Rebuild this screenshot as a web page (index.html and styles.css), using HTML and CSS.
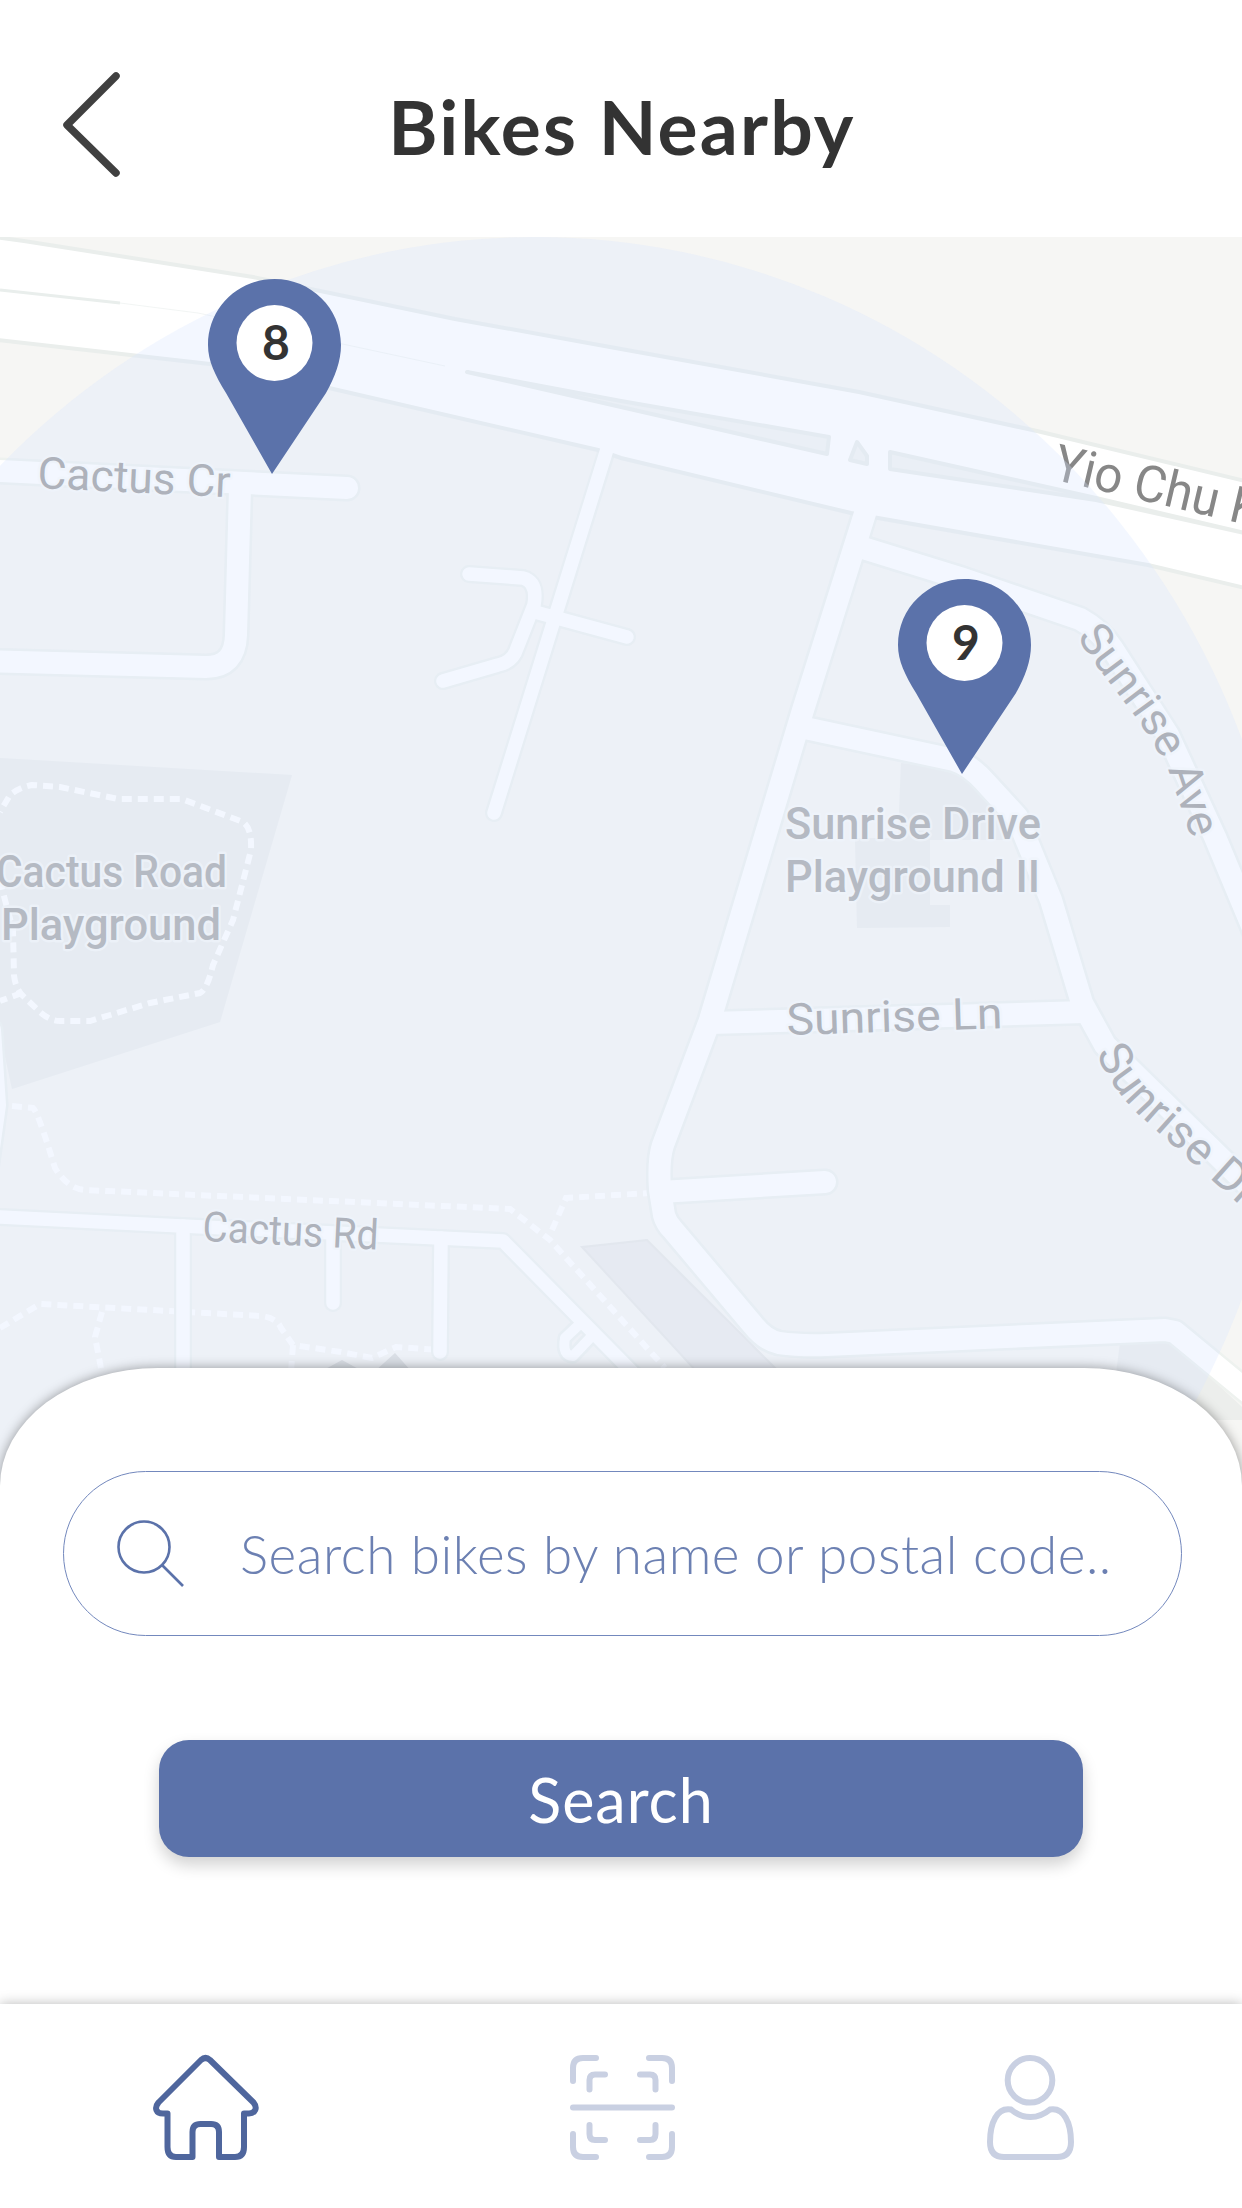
FILE: index.html
```html
<!DOCTYPE html>
<html lang="en">
<head>
<meta charset="utf-8">
<title>Bikes Nearby</title>
<link rel="stylesheet" href="styles.css">
</head>
<body>
<div class="app">
  <header class="header">
    <svg class="back" width="60" height="112" viewBox="60 69 60 112" role="img" aria-label="Back"><path d="M116 76 L67 125 L116 173"/></svg>
    <h1 class="title">Bikes Nearby</h1>
  </header>

  <main class="map">
    <svg class="map-canvas" width="1242" height="1263" viewBox="0 237 1242 1263">
      <defs>
        <path id="ave" d="M1076 637 Q1098 668 1118 694 Q1156 742 1171 778 L1197 855"/>
        <path id="drive" d="M1096 1053 Q1110 1086 1138 1114 L1290 1250"/>
        <g id="pin">
          <path class="pin-body" d="M66.5 0 C103 0 133 29 133 66 C133 82 127 98 118 114 L64 195 L18 114 C7 96 0 82 0 66 C0 29 30 0 66.5 0 Z"/>
          <circle class="pin-hole" cx="66.5" cy="64" r="38"/>
        </g>
      </defs>

      <!-- parks and plots -->
      <path class="park" d="M0 758 L292 775 L220 1022 L12 1089 L0 1033 Z"/>
      <path class="park" d="M901 763 L954 770 L990 803 L1010 840 L930 840 L930 905 L950 905 L950 927 L857 928 L855 838 L898 838 Z"/>
      <path class="park" d="M1120 1343 L1170 1340 L1242 1407 L1242 1420 L1110 1420 Z"/>
      <path class="plot" d="M582 1247 L647 1240 L779 1372 L697 1372 Z"/>
      <path class="plot-dark" d="M320 1372 L342 1360 L364 1372 Z M374 1372 L395 1353 L412 1372 Z"/>

      <!-- footpaths -->
      <g class="foot">
        <path d="M0 880 L5 900 L13 930 L14 975 Q15 987 22 995 L40 1012 Q50 1021 60 1021 H90 L110 1015 L150 1003 L200 993 Q207 990 213 965 L233 920 L251 850 Q252 828 243 822 L182 799 H118 L60 787 L32 785 Q20 787 10 795 L0 812"/>
        <path d="M22 993 L0 1001"/>
        <path d="M12 1106 L33 1108 Q38 1112 55 1168 Q68 1189 85 1190 L510 1209 L550 1240 L665 1368"/>
        <path d="M552 1230 L566 1198 L650 1193"/>
        <path d="M0 1328 L40 1304 L170 1311 L261 1316 Q277 1318 281 1328 L293 1345 L341 1352 L372 1358 L396 1347 L440 1350"/>
        <path d="M293 1345 L291 1372"/>
        <path d="M102 1312 L95 1337 L101 1368"/>
      </g>

      <!-- road casings -->
      <g class="casing">
        <g class="wide">
          <path d="M-20 470 L347 488"/>
          <path d="M240 488 L236 635 Q235 667 206 667 L-20 661"/>
          <path d="M865 513 L803 710 L710 1020 L663 1145 Q658 1160 660 1190 L664 1215 Q666 1223 673 1230 L753 1325 Q765 1340 779 1343 Q800 1346 827 1345 L1165 1330 L1175 1332 L1260 1402"/>
          <path d="M863 548 L960 578 L1080 619 Q1100 630 1112 648 L1168 735 L1215 837 L1260 945"/>
          <path d="M805 728 L954 760 Q970 765 985 782 L1017 817 L1051 900 L1082 1003 L1105 1045 L1250 1187"/>
          <path d="M710 1023 L1085 1012"/>
          <path d="M661 1192 L825 1182"/>
          <path d="M-10 1030 L-5 1105 L-14 1170"/>
        </g>
        <g class="narrow">
          <path d="M606 453 L554 620 L494 813"/>
          <path d="M469 574 L523 578 Q538 582 534 605 L517 648 Q513 662 498 665 L443 681"/>
          <path d="M535 612 L627 637"/>
          <path d="M-20 1216 L182 1226 L503 1241 L640 1380"/>
          <path d="M183 1226 V1390"/>
          <path d="M333 1234 V1303"/>
          <path d="M441 1238 L440 1352"/>
        </g>
        <path class="loop" d="M582 1322 L565 1338 Q562 1356 573 1356 L592 1336"/>
      </g>

      <!-- expressway -->
      <path class="express" d="M-20 235 L24 241 L253 277 L455 319 L621 349 L859 392 L1037 431 L1262 485 V592 L1148 565 L878 518 L851 513 L621 458 L598 450 L329 388 L210 364 L-20 338 Z"/>
      <path class="median" d="M467 372 L621 401 L829 437 L827 454 L621 407 Z M857 442 L867 456 V464 L850 460 Z M890 452 L1096 498 L1262 537 L1096 500 L890 469 Z"/>
      <path class="lane" d="M0 290 L120 303"/>
      <path class="lane faint" d="M120 303 L198 313 L445 366"/>

      <!-- road surfaces -->
      <g class="surface">
        <g class="wide">
          <path d="M-20 470 L347 488"/>
          <path d="M240 488 L236 635 Q235 667 206 667 L-20 661"/>
          <path d="M868 504 L803 710 L710 1020 L663 1145 Q658 1160 660 1190 L664 1215 Q666 1223 673 1230 L753 1325 Q765 1340 779 1343 Q800 1346 827 1345 L1165 1330 L1175 1332 L1260 1402"/>
          <path d="M863 548 L960 578 L1080 619 Q1100 630 1112 648 L1168 735 L1215 837 L1260 945"/>
          <path d="M805 728 L954 760 Q970 765 985 782 L1017 817 L1051 900 L1082 1003 L1105 1045 L1250 1187"/>
          <path d="M710 1023 L1085 1012"/>
          <path d="M661 1192 L825 1182"/>
          <path d="M-10 1030 L-5 1105 L-14 1170"/>
        </g>
        <g class="narrow">
          <path d="M608 446 L554 620 L494 813"/>
          <path d="M469 574 L523 578 Q538 582 534 605 L517 648 Q513 662 498 665 L443 681"/>
          <path d="M535 612 L627 637"/>
          <path d="M-20 1216 L182 1226 L503 1241 L640 1380"/>
          <path d="M183 1226 V1390"/>
          <path d="M333 1234 V1303"/>
          <path d="M441 1238 L440 1352"/>
        </g>
        <path class="loop" d="M582 1322 L565 1338 Q562 1356 573 1356 L592 1336"/>
      </g>

      <!-- labels -->
      <g class="label">
        <text transform="translate(37 488) rotate(2.7)" textLength="193" lengthAdjust="spacingAndGlyphs">Cactus Cr</text>
        <text class="place" x="-4" y="887" textLength="231" lengthAdjust="spacingAndGlyphs">Cactus Road</text>
        <text class="place" x="1" y="940" textLength="220" lengthAdjust="spacingAndGlyphs">Playground</text>
        <text class="place" x="785" y="839" textLength="256" lengthAdjust="spacingAndGlyphs">Sunrise Drive</text>
        <text class="place" x="785" y="892" textLength="255" lengthAdjust="spacingAndGlyphs">Playground II</text>
        <text transform="translate(787 1035) rotate(-1.8)" textLength="216" lengthAdjust="spacingAndGlyphs">Sunrise Ln</text>
        <text transform="translate(202 1241) rotate(2.8)" textLength="176" lengthAdjust="spacingAndGlyphs" class="small">Cactus Rd</text>
        <text class="curved"><textPath href="#ave">Sunrise Ave</textPath></text>
        <text class="curved drive"><textPath href="#drive">Sunrise Dr</textPath></text>
        <text class="major" transform="translate(1051 479) rotate(13.2)" textLength="212" lengthAdjust="spacingAndGlyphs">Yio Chu K</text>
      </g>

      <ellipse class="range" cx="535" cy="1019" rx="757" ry="782"/>

      <use href="#pin" x="208" y="279"/>
      <text class="count" x="276" y="360">8</text>
      <use href="#pin" x="898" y="579"/>
      <text class="count" x="966" y="660">9</text>
    </svg>
  </main>

  <section class="sheet">
    <label class="field">
      <svg class="glass" width="74" height="74" viewBox="112 1517 74 74"><circle cx="143" cy="1547" r="25.5"/><path d="M161.500 1565.500 L182 1586"/></svg>
      <span class="hint">Search bikes by name or postal code..</span>
    </label>
    <button class="submit" type="button">Search</button>
  </section>

  <nav class="nav">
    <svg class="tab active" width="150" height="150" viewBox="0 0 150 150" role="img" aria-label="Home"><path d="M71 30 Q75.500 26 80 30 L123.500 72.500 C128 78 125 83.500 119 83.500 H114 V117 Q114 127 105 127 H89 V102 Q89 94 81 94 H70.500 Q62.500 94 62.500 102 V127 H46 Q37.500 127 37.500 117 V83.500 H33 C26 83.500 24 78 28.500 72.500 Z"/></svg>
    <svg class="tab" width="150" height="150" viewBox="0 0 150 150" role="img" aria-label="Scan"><path d="M23 51 V38 Q23 28 33 28 H46 M99 28 H112 Q122 28 122 38 V51 M122 104 V117 Q122 127 112 127 H99 M46 127 H33 Q23 127 23 117 V104 M39.500 59.500 V50 Q39.500 44.500 45 44.500 H55 M90 44.500 H100 Q105.500 44.500 105.500 50 V59.500 M105.500 95 V104 Q105.500 110 100 110 H90 M55 110 H45 Q39.500 110 39.500 104 V95 M23 77.500 H122"/></svg>
    <svg class="tab" width="150" height="150" viewBox="10 0 150 150" role="img" aria-label="Profile"><circle cx="70" cy="50.300" r="22.300"/><path d="M51 79.500 C63 89.500 78 89.500 90 79.500 C104 77 111 93 111 112 Q111 127 97 127 H44 Q30 127 30 112 C30 93 37 77 51 79.500 Z"/></svg>
  </nav>
</div>
</body>
</html>
```
FILE: styles.css
```css
body { margin: 0; background: #fff; font-family: Lato, sans-serif; }
.app { width: 1242px; height: 2208px; display: flex; flex-direction: column; overflow: hidden; }

.header { height: 237px; flex: none; box-sizing: border-box; padding: 13px 60px 0; display: grid; grid-template-columns: 60px 1fr 60px; align-items: center; }
.back { fill: none; stroke: #404040; stroke-width: 7.5; stroke-linecap: round; stroke-linejoin: round; }
.title { margin: 2px 0 0 2px; text-align: center; font-size: 75px; font-weight: 700; line-height: 90px; color: #333; letter-spacing: 2.2px; white-space: nowrap; }

.map { height: 1263px; flex: none; background: #f6f6f4; }
.map-canvas { display: block; }
.park { fill: #eceeec; }
.plot { fill: #ececec; stroke: #e7e8e7; stroke-width: 2; }
.plot-dark { fill: #dcdddc; }
.foot path { fill: none; stroke: #fff; stroke-width: 6; stroke-dasharray: 10 6; }
.casing path, .surface path { fill: none; stroke-linecap: round; stroke-linejoin: round; }
.casing path { stroke: #eef2ef; }
.surface path { stroke: #fff; }
.casing .wide path { stroke-width: 27; }
.surface .wide path { stroke-width: 22; }
.casing .narrow path { stroke-width: 18; }
.surface .narrow path { stroke-width: 13.500; }
.casing .loop { stroke-width: 15; }
.surface .loop { stroke-width: 10; }
.express { fill: #fff; stroke: #eaeeec; stroke-width: 4; }
.median { fill: #f2f4f2; stroke: #eaeeec; stroke-width: 4; stroke-linejoin: round; }
.lane { fill: none; stroke: #e9eeec; stroke-width: 3; }
.faint { stroke-width: 1; opacity: .6; }
.label text { font: 44px Roboto, sans-serif; fill: #9c9c9e; stroke: #fafbfa; stroke-width: 5; stroke-opacity: .7; stroke-linejoin: round; paint-order: stroke; }
.label .place { font-weight: 500; fill: #a7a8a9; }
.label .small { font-size: 42px; }
.label .curved { font-size: 45px; }
.label .drive { font-size: 46px; letter-spacing: .6px; }
.label .major { font-size: 51px; fill: #878787; stroke: #fff; }
.range { fill: #d6e3ff; fill-opacity: .3; }
.pin-body { fill: #5b72aa; }
.pin-hole { fill: #fff; }
.count { font: 700 48px Lato, sans-serif; fill: #333; text-anchor: middle; }

.sheet { position: relative; margin-top: -132px; height: 636px; flex: none; box-sizing: border-box; padding: 103px 60px 0 63px; display: flex; flex-direction: column; background: #fff; border-radius: 158px 158px 0 0 / 118px 118px 0 0; box-shadow: 0 0 12px rgba(0, 0, 0, .38); }
.field { height: 165px; box-sizing: border-box; border: 1.500px solid #7388bd; border-radius: 83px; display: flex; align-items: center; padding-left: 49px; }
.glass { flex: none; fill: none; stroke: #5b72aa; stroke-width: 2.600; }
.hint { margin-left: 53px; font-size: 53px; font-weight: 300; line-height: 64px; color: #6c80b2; white-space: nowrap; letter-spacing: .52px; }
.submit { align-self: center; width: 924px; height: 117px; margin-top: 104px; margin-right: 3px; border: 0; padding: 1px 0 0; border-radius: 30px; background: #5b72aa; box-shadow: 0 8px 16px rgba(0, 0, 0, .18); color: #fff; font: 400 61px Lato, sans-serif; letter-spacing: 1px; }

.nav { position: relative; flex: 1; box-sizing: border-box; padding: 26px 122px 0 130px; display: flex; justify-content: space-between; background: #fff; box-shadow: 0 0 12px rgba(0, 0, 0, .28); }
.tab { fill: none; stroke: #c9d0e2; stroke-width: 6; stroke-linecap: round; stroke-linejoin: round; }
.tab.active { stroke: #4f669d; }
```
